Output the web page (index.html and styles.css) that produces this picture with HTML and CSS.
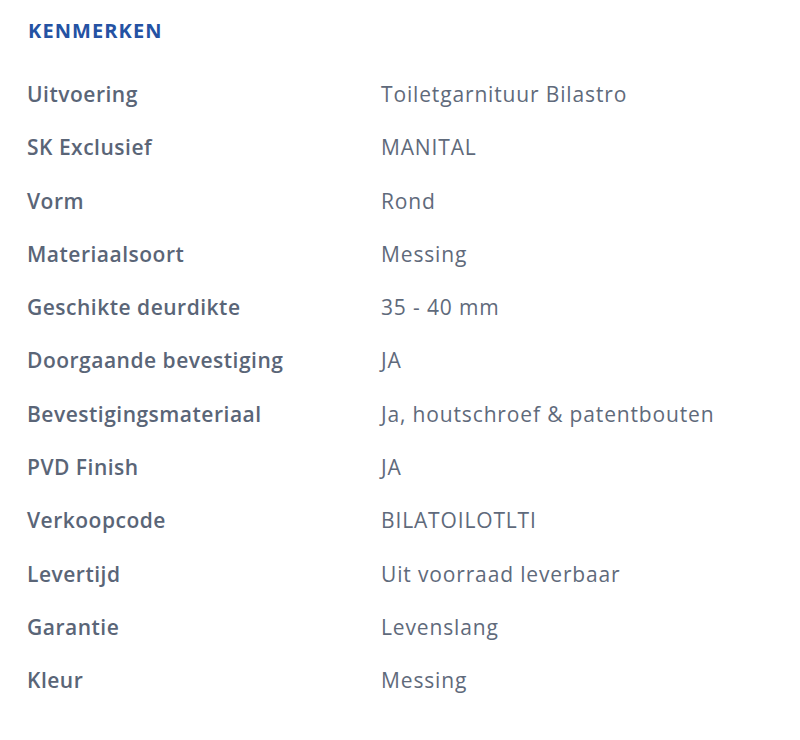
FILE: index.html
```html
<!DOCTYPE html>
<html lang="nl">
<head>
<meta charset="utf-8">
<link rel="stylesheet" href="styles.css">
</head>
<body>
<section class="specs">
  <h2 class="specs-title">KENMERKEN</h2>
  <dl class="specs-list">
    <div class="row"><dt>Uitvoering</dt><dd>Toiletgarnituur Bilastro</dd></div>
    <div class="row"><dt>SK Exclusief</dt><dd>MANITAL</dd></div>
    <div class="row"><dt>Vorm</dt><dd>Rond</dd></div>
    <div class="row"><dt>Materiaalsoort</dt><dd>Messing</dd></div>
    <div class="row"><dt>Geschikte deurdikte</dt><dd>35 - 40 mm</dd></div>
    <div class="row"><dt>Doorgaande bevestiging</dt><dd>JA</dd></div>
    <div class="row"><dt>Bevestigingsmateriaal</dt><dd>Ja, houtschroef &amp; patentbouten</dd></div>
    <div class="row"><dt>PVD Finish</dt><dd>JA</dd></div>
    <div class="row"><dt>Verkoopcode</dt><dd>BILATOILOTLTI</dd></div>
    <div class="row"><dt>Levertijd</dt><dd>Uit voorraad leverbaar</dd></div>
    <div class="row"><dt>Garantie</dt><dd>Levenslang</dd></div>
    <div class="row"><dt>Kleur</dt><dd>Messing</dd></div>
  </dl>
</section>
</body>
</html>
```
FILE: styles.css
```css
html, body {
  margin: 0;
  padding: 0;
  background: #ffffff;
}
body {
  font-family: "Open Sans", "Noto Sans", sans-serif;
}
.specs {
  padding: 18px 0 0 27px;
}
.specs-title {
  margin: 0 0 0 1px;
  font-size: 20px;
  line-height: 26px;
  font-weight: 700;
  color: #2452a3;
  letter-spacing: 1.1px;
}
.specs-list {
  margin: 36px 0 0 0;
  padding: 0;
}
.row {
  display: grid;
  grid-template-columns: 354px 1fr;
  height: 53.3px;
  align-items: start;
}
.row dt {
  margin: 0;
  font-size: 21px;
  line-height: 28px;
  font-weight: 600;
  color: #5a6577;
  letter-spacing: 0.5px;
}
.row dd {
  margin: 0;
  font-size: 21px;
  line-height: 28px;
  font-weight: 400;
  color: #5f6a7b;
  letter-spacing: 0.85px;
}
```
